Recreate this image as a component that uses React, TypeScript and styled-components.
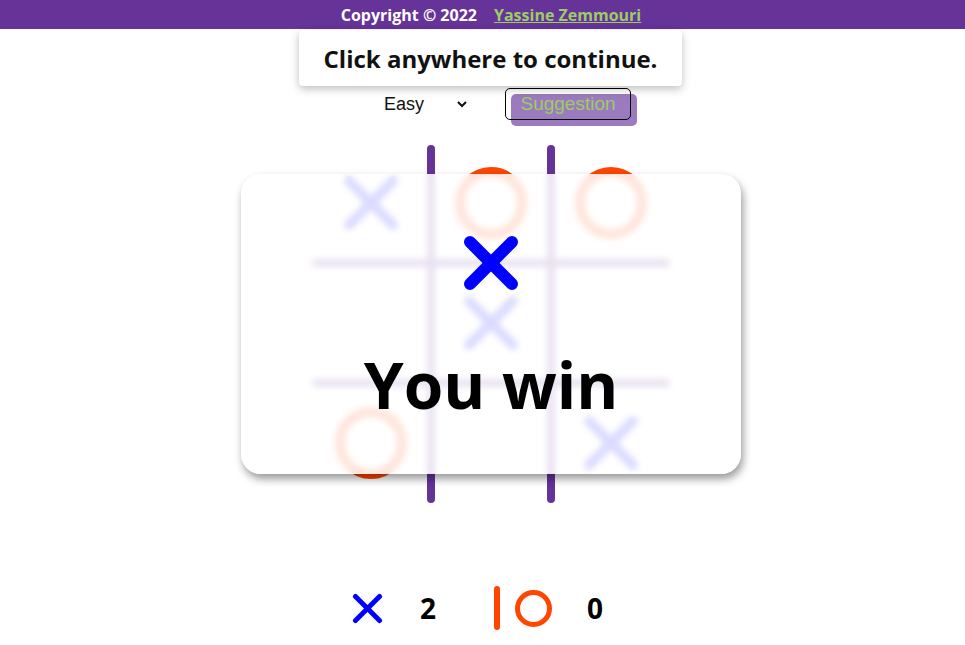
import styled, { createGlobalStyle } from "styled-components";

const GlobalStyle = createGlobalStyle`
  body {
    margin: 0;
    font-family: "Open Sans", "Liberation Sans", sans-serif;
    background: #fff;
    overflow: hidden;
  }
`;

const PURPLE = "#663399";
const BLUE = "#0000ff";
const ORANGE = "#ff4500";
const GREEN = "#9ccc65";

const Header = styled.header`
  height: 29px;
  background: ${PURPLE};
  display: flex;
  justify-content: center;
  align-items: center;
  gap: 17px;
  padding-left: 17px;
  color: #fff;
  font-weight: 700;
  font-size: 16px;

  a {
    color: ${GREEN};
    text-decoration: underline;
  }
`;

const Toast = styled.div`
  position: absolute;
  top: 30px;
  left: 299px;
  width: 383px;
  height: 56px;
  background: #fff;
  border-radius: 4px;
  box-shadow: 0 3px 8px rgba(0, 0, 0, 0.25);
  display: flex;
  align-items: center;
  justify-content: center;
  font-weight: 700;
  font-size: 24px;
  color: #111;
  z-index: 20;
`;

const Main = styled.main`
  padding-left: 17px;
  display: flex;
  flex-direction: column;
  align-items: center;
`;

const Controls = styled.div`
  display: flex;
  align-items: center;
  gap: 35px;
  margin-top: 59px;
  padding-left: 29px;
  height: 32px;
`;

const LevelSelect = styled.select`
  width: 90px;
  height: 24px;
  border: none;
  background: #fff;
  font-family: "Liberation Sans", Arial, sans-serif;
  font-size: 18px;
  color: #111;
  padding-left: 0;
`;

const SuggestButton = styled.button`
  position: relative;
  width: 126px;
  height: 32px;
  border: 1px solid #000;
  border-radius: 5px;
  background: transparent;
  color: ${GREEN};
  font-family: "Liberation Sans", Arial, sans-serif;
  font-size: 19px;
  padding: 0 0 1px;

  &::before {
    content: "";
    position: absolute;
    inset: -1px;
    transform: translate(6px, 6px);
    background: rgba(102, 51, 153, 0.65);
    border-radius: 5px;
    z-index: -1;
  }
`;

const Board = styled.div`
  position: relative;
  width: 360px;
  height: 360px;
  margin-top: 23px;
`;

const GridLines = styled.svg`
  position: absolute;
  inset: 0;
`;

const Cells = styled.div`
  position: absolute;
  inset: 0;
  display: grid;
  grid-template-columns: repeat(3, 120px);
  grid-template-rows: repeat(3, 120px);
`;

const Cell = styled.div`
  display: flex;
  align-items: center;
  justify-content: center;
`;

const Overlay = styled.div`
  position: absolute;
  top: 174px;
  left: 241px;
  width: 500px;
  height: 300px;
  border-radius: 20px;
  background: rgba(255, 255, 255, 0.86);
  backdrop-filter: blur(3px);
  box-shadow: 2px 5px 8px rgba(0, 0, 0, 0.4);
  display: flex;
  flex-direction: column;
  align-items: center;
  z-index: 10;
`;

const WinnerMark = styled.div`
  margin-top: 61px;
  height: 56px;
`;

const WinText = styled.div`
  margin-top: 62px;
  font-size: 64px;
  font-weight: 700;
  color: #000;
  line-height: 1;
`;

const ScoreRow = styled.div`
  display: flex;
  align-items: center;
  margin-top: 82px;
  height: 46px;
`;

const PlayerScore = styled.div<{ $width: number }>`
  display: flex;
  align-items: center;
  width: ${(p) => p.$width}px;
  font-size: 28px;
  font-weight: 700;
  color: #000;
`;

const TurnBar = styled.span`
  width: 6px;
  height: 44px;
  border-radius: 3px;
  background: ${ORANGE};
  margin-right: 15px;
`;

const IconSlot = styled.span<{ $gap: number }>`
  display: flex;
  margin-right: ${(p) => p.$gap}px;
`;

function XMark({ size, stroke, color = BLUE }: { size: number; stroke: number; color?: string }) {
  const p = stroke / 2 + 1;
  return (
    <svg width={size} height={size} viewBox={`0 0 ${size} ${size}`}>
      <g stroke={color} strokeWidth={stroke} strokeLinecap="round">
        <line x1={p} y1={p} x2={size - p} y2={size - p} />
        <line x1={size - p} y1={p} x2={p} y2={size - p} />
      </g>
    </svg>
  );
}

function OMark({ size, stroke, color = ORANGE }: { size: number; stroke: number; color?: string }) {
  return (
    <svg width={size} height={size} viewBox={`0 0 ${size} ${size}`}>
      <circle cx={size / 2} cy={size / 2} r={(size - stroke) / 2} fill="none" stroke={color} strokeWidth={stroke} />
    </svg>
  );
}

const board = ["x", "o", "o", "", "x", "", "o", "", "x"];

export default function App() {
  return (
    <>
      <GlobalStyle />
      <Header>
        <span>Copyright © 2022</span>
        <a href="#">Yassine Zemmouri</a>
      </Header>
      <Toast>Click anywhere to continue.</Toast>
      <Main>
        <Controls>
          <LevelSelect defaultValue="easy">
            <option value="easy">Easy</option>
            <option value="medium">Medium</option>
            <option value="hard">Hard</option>
          </LevelSelect>
          <SuggestButton>Suggestion</SuggestButton>
        </Controls>

        <Board>
          <GridLines width="360" height="360" viewBox="0 0 360 360">
            <g stroke={PURPLE} strokeWidth="8" strokeLinecap="round">
              <line x1="120" y1="6" x2="120" y2="356" />
              <line x1="240" y1="6" x2="240" y2="356" />
              <line x1="5" y1="120" x2="355" y2="120" />
              <line x1="5" y1="240" x2="355" y2="240" />
            </g>
          </GridLines>
          <Cells>
            {board.map((v, i) => (
              <Cell key={i}>
                {v === "x" && <XMark size={56} stroke={10} />}
                {v === "o" && <OMark size={72} stroke={10} />}
              </Cell>
            ))}
          </Cells>
        </Board>

        <ScoreRow>
          <PlayerScore $width={142}>
            <IconSlot $gap={37}>
              <XMark size={31} stroke={5} />
            </IconSlot>
            2
          </PlayerScore>
          <PlayerScore $width={136}>
            <TurnBar />
            <IconSlot $gap={35}>
              <OMark size={37} stroke={5} />
            </IconSlot>
            0
          </PlayerScore>
        </ScoreRow>
      </Main>

      <Overlay>
        <WinnerMark>
          <XMark size={56} stroke={12} />
        </WinnerMark>
        <WinText>You win</WinText>
      </Overlay>
    </>
  );
}
